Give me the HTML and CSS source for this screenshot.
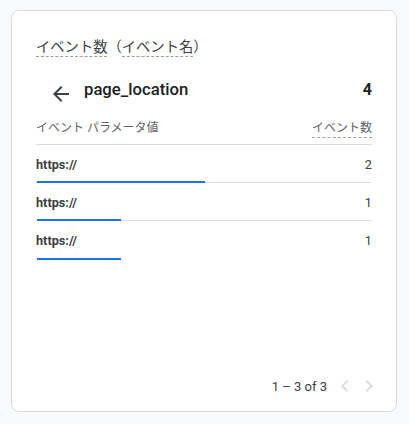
FILE: index.html
```html
<!DOCTYPE html>
<html lang="ja">
<head>
<meta charset="utf-8">
<link rel="stylesheet" href="styles.css">
</head>
<body>
<div class="card">
  <div class="title"><span class="dash">イベント数</span>（<span class="dash">イベント名</span>）</div>
  <div class="drill">
    <svg class="back" width="24" height="24" viewBox="0 0 24 24"><path d="M20 11H7.83l5.59-5.59L12 4l-8 8 8 8 1.41-1.41L7.830 13H20v-2z" fill="#3c4043"/></svg>
    <span class="drill-name">page_location</span>
    <span class="drill-total">4</span>
  </div>
  <div class="head">
    <span>イベント パラメータ値</span>
    <span class="dash">イベント数</span>
  </div>
  <div class="rows">
    <div class="row">
      <div class="row-top"><span class="name">https://</span><span class="val">2</span></div>
      <div class="bar" style="width:50%"></div>
    </div>
    <div class="row">
      <div class="row-top"><span class="name">https://</span><span class="val">1</span></div>
      <div class="bar" style="width:25%"></div>
    </div>
    <div class="row last">
      <div class="row-top"><span class="name">https://</span><span class="val">1</span></div>
      <div class="bar" style="width:25%"></div>
    </div>
  </div>
  <div class="pager">
    <span class="range">1 – 3 of 3</span>
    <svg class="chev" width="24" height="24" viewBox="0 0 24 24"><path d="M15.41 7.41L14 6l-6 6 6 6 1.41-1.41L10.83 12z" fill="#dadce0"/></svg>
    <svg class="chev" width="24" height="24" viewBox="0 0 24 24"><path d="M10 6L8.59 7.41 13.17 12l-4.58 4.59L10 18l6-6z" fill="#dadce0"/></svg>
  </div>
</div>
</body>
</html>
```
FILE: styles.css
```css
html, body {
  margin: 0;
  padding: 0;
  background: #f8f9fa;
}
body {
  font-family: Roboto, "Noto Sans CJK JP", sans-serif;
  color: #202124;
}
.card {
  margin: 10px 0 0 11px;
  width: 386px;
  height: 402px;
  box-sizing: border-box;
  background: #fff;
  border: 1px solid #dadce0;
  border-radius: 8px;
  padding: 26px 0 0 24px;
  display: flex;
  flex-direction: column;
}
.title {
  font-size: 14.3px;
  line-height: 20px;
  color: #3c4043;
}
.dash {
  border-bottom: 1px dashed #9aa0a6;
  padding-bottom: 1px;
}
.drill {
  display: flex;
  align-items: center;
  margin-top: 20px;
  height: 24px;
  margin-right: 24px;
}
.back {
  margin-left: 13px;
  margin-top: 10px;
}
.drill-name {
  margin-left: 11px;
  font-size: 16.7px;
  font-weight: 500;
  color: #202124;
}
.drill-total {
  margin-left: auto;
  font-size: 16px;
  font-weight: 700;
  color: #202124;
}
.head {
  display: flex;
  justify-content: space-between;
  margin-top: 19px;
  margin-right: 24px;
  font-size: 12px;
  line-height: 16px;
  color: #5f6368;
  padding-bottom: 6px;
  border-bottom: 1px solid #dadce0;
}
.rows {
  margin-right: 24px;
}
.row {
  border-bottom: 1px solid #dadce0;
  height: 38px;
  box-sizing: border-box;
  padding-top: 12px;
  position: relative;
}
.row.last {
  border-bottom: none;
}
.row-top {
  display: flex;
  justify-content: space-between;
  font-size: 12.7px;
  line-height: 16px;
}
.name {
  font-weight: 700;
  color: #3c4043;
}
.val {
  color: #3c4043;
}
.bar {
  position: absolute;
  left: 1px;
  bottom: -1px;
  height: 2px;
  background: #1a73e8;
}
.pager {
  margin-top: auto;
  margin-bottom: 13px;
  margin-right: 15px;
  display: flex;
  align-items: center;
  justify-content: flex-end;
  font-size: 13px;
  color: #3c4043;
}
.range {
  margin-right: 6px;
}
```
